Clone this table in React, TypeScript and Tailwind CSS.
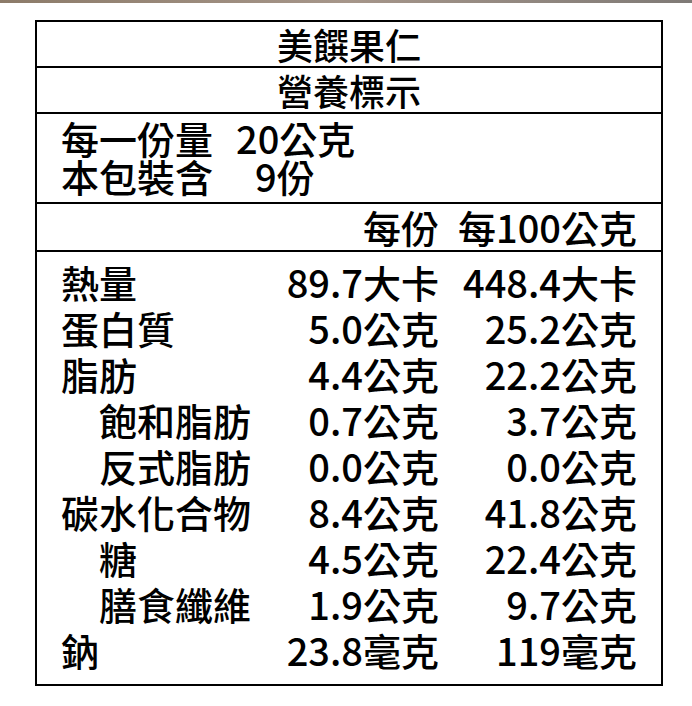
const font = { fontFamily: '"Noto Sans CJK TC", "Noto Sans", sans-serif' };

type Row = { label: string; perServing: string; per100: string; indent?: boolean };

const rows: Row[] = [
  { label: '熱量', perServing: '89.7大卡', per100: '448.4大卡' },
  { label: '蛋白質', perServing: '5.0公克', per100: '25.2公克' },
  { label: '脂肪', perServing: '4.4公克', per100: '22.2公克' },
  { label: '飽和脂肪', perServing: '0.7公克', per100: '3.7公克', indent: true },
  { label: '反式脂肪', perServing: '0.0公克', per100: '0.0公克', indent: true },
  { label: '碳水化合物', perServing: '8.4公克', per100: '41.8公克' },
  { label: '糖', perServing: '4.5公克', per100: '22.4公克', indent: true },
  { label: '膳食纖維', perServing: '1.9公克', per100: '9.7公克', indent: true },
  { label: '鈉', perServing: '23.8毫克', per100: '119毫克' },
];

export default function App() {
  return (
    <div className="w-[692px] h-[706px] bg-white text-black font-medium" style={font}>
      <div className="h-[3px] bg-gradient-to-r from-[#8c7b69] via-[#a6968a] to-[#7f7a76]" />

      <div className="ml-[35px] w-[628px] mt-[17px] border-2 border-black">
        {/* Title */}
        <div className="h-[46px] border-b-2 border-black flex items-center justify-center text-[36px] leading-[44px]">
          美饌果仁
        </div>
        <div className="h-[46px] border-b-2 border-black flex items-center justify-center text-[36px] leading-[44px]">
          營養標示
        </div>

        {/* Serving info */}
        <div className="h-[90px] border-b-2 border-black px-[24px] pt-[5px] text-[38px] leading-[38px]">
          <div className="flex whitespace-nowrap">
            <span className="w-[175px]">每一份量</span>
            <span>20公克</span>
          </div>
          <div className="flex whitespace-nowrap">
            <span className="w-[175px]">本包裝含</span>
            <span className="pl-[19px]">9份</span>
          </div>
        </div>

        {/* Column header */}
        <div className="h-[48px] border-b-2 border-black px-[24px] flex items-center text-[38px] leading-[46px] whitespace-nowrap">
          <span className="flex-1" />
          <span className="w-[180px] text-right">每份</span>
          <span className="w-[198px] text-right">每100公克</span>
        </div>

        {/* Nutrients */}
        <div className="px-[24px] pt-[7px] pb-[11px] text-[38px]">
          {rows.map((row) => (
            <div key={row.label} className="flex items-center h-[46px] leading-[46px] whitespace-nowrap">
              <span className={`flex-1 ${row.indent ? 'pl-[38px]' : ''}`}>{row.label}</span>
              <span className="w-[180px] text-right">{row.perServing}</span>
              <span className="w-[198px] text-right">{row.per100}</span>
            </div>
          ))}
        </div>
      </div>
    </div>
  );
}
